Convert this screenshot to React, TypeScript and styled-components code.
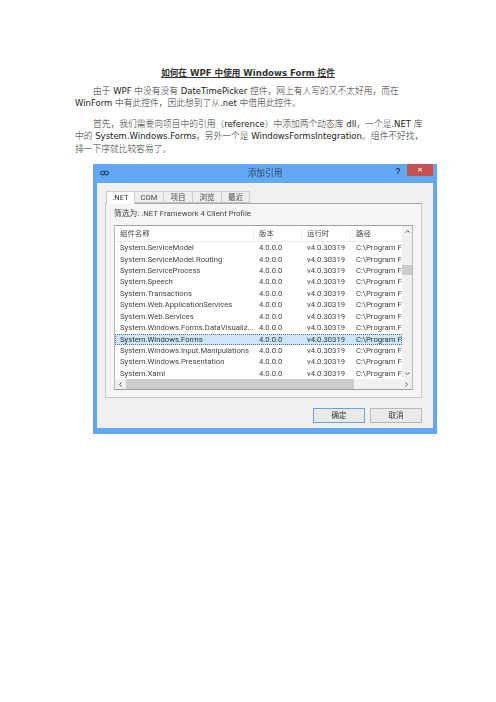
import React from 'react';
import styled, {createGlobalStyle} from 'styled-components';

const GlobalStyle = createGlobalStyle`
    html, body {
        margin: 0;
        padding: 0;
        background: #fff;
    }
`;

const Page = styled.div`
    width: 496px;
    height: 702px;
    overflow: hidden;
    padding: 67px 0 0 75px;
    box-sizing: border-box;
    color: #222;
    font-family: "DejaVu Sans", "Noto Sans CJK SC", sans-serif;
`;

const Title = styled.h1`
    margin: 0 0 4.6px;
    width: 346px;
    font-size: 8.6px;
    line-height: 13px;
    font-weight: 700;
    text-align: center;
    text-decoration: underline;
    color: #333;
`;

const Paragraph = styled.p`
    margin: 0 0 7.6px;
    width: 360px;
    font-size: 8.5px;
    line-height: 12.7px;
    text-indent: 18px;
    white-space: nowrap;
`;

const Cjk = styled.span`
    font-family: "Noto Sans CJK SC", sans-serif;
    font-size: 8.75px;
    line-height: 1;
    font-weight: 300;
    color: #333;
`;

const Window = styled.div`
    width: 344px;
    height: 270px;
    margin: 8.4px 0 0 18px;
    padding: 0 4px 6px;
    box-sizing: border-box;
    display: flex;
    flex-direction: column;
    background: #62a8f4;
    font-family: Roboto, "Noto Sans CJK SC", sans-serif;
    color: #444;
    filter: blur(0.35px);
`;

const TitleBar = styled.div`
    height: 19px;
    flex: none;
    display: grid;
    grid-template-columns: 1fr auto 1fr;
    color: #33475c;
`;

const TitleIcon = styled.svg`
    width: 9px;
    height: 6px;
    margin: 6px 0 0 3px;
`;

const TitleText = styled.div`
    font-size: 8.7px;
    line-height: 18px;
`;

const TitleButtons = styled.div`
    display: flex;
    justify-content: flex-end;
    align-items: flex-start;
`;

const HelpButton = styled.div`
    width: 12px;
    margin-right: 3px;
    font: 700 9px/14px "Liberation Sans", sans-serif;
    text-align: center;
    color: #243a52;
`;

const CloseButton = styled.div`
    width: 26px;
    height: 12px;
    background: #c75050;
    color: #fff;
    font: 700 8px/12px "Liberation Sans", sans-serif;
    text-align: center;
`;

const Client = styled.div`
    flex: 1;
    display: flex;
    flex-direction: column;
    background: #f0f0f0;
    padding: 8px 11px 5px 8px;
    min-height: 0;
`;

const TabStrip = styled.div`
    display: flex;
    height: 12px;
    padding-left: 1px;
`;

const Tab = styled.div<{$active?: boolean; $width: number}>`
    width: ${p => p.$width}px;
    box-sizing: border-box;
    height: ${p => (p.$active ? 13 : 12)}px;
    font-size: 7.6px;
    line-height: 12px;
    text-align: center;
    position: relative;
    z-index: ${p => (p.$active ? 1 : 0)};
    background: ${p => (p.$active ? '#fff' : '#eeeeee')};
    border: 1px solid #cccccc;
    border-bottom: ${p => (p.$active ? 'none' : '1px solid #c4c4c4')};
    border-left-width: ${p => (p.$active ? 1 : 0)}px;
    color: ${p => (p.$active ? '#333' : '#4a4a4a')};
`;

const TabPage = styled.div`
    height: 195px;
    box-sizing: border-box;
    padding: 0 8px;
    background: #f5f5f5;
    border: 1px solid #c8c8c8;
    border-top-color: #a8a8a8;
`;

const Filter = styled.div`
    height: 21px;
    font-size: 7.8px;
    line-height: 20px;
    white-space: nowrap;
`;

const ListBox = styled.div`
    width: 299px;
    height: 165px;
    box-sizing: border-box;
    background: #fff;
    border: 1px solid #a0a0a0;
    border-left-color: #b8b8b8;
    border-right-color: #b8b8b8;
    display: flex;
    flex-direction: column;
`;

const ListTop = styled.div`
    flex: 1;
    display: flex;
    min-height: 0;
`;

const Table = styled.div`
    flex: 1;
    min-width: 0;
`;

const Cols = styled.div`
    display: grid;
    grid-template-columns: 139px 48px 49px 52px;
`;

const HeaderRow = styled(Cols)`
    height: 15px;
    border-bottom: 1px solid #ececec;
    font-size: 7.4px;
    line-height: 15px;
`;

const HeaderCell = styled.div`
    padding-left: 5px;
    border-right: 1px solid #f2f2f2;
    overflow: hidden;
`;

const Row = styled(Cols)<{$selected?: boolean}>`
    height: 11.45px;
    box-sizing: border-box;
    font-size: 7.7px;
    line-height: 11px;
    background: ${p => (p.$selected ? '#cfe6f8' : 'transparent')};
    outline: ${p => (p.$selected ? '1px dotted #5c6f80' : 'none')};
    outline-offset: -1px;
    color: ${p => (p.$selected ? '#26323c' : '#444')};
`;

const Cell = styled.div`
    padding-left: 5px;
    white-space: nowrap;
`;

const VScroll = styled.div`
    width: 10px;
    flex: none;
    background: #f0f0f0;
    display: flex;
    flex-direction: column;
    align-items: center;
    justify-content: space-between;
    position: relative;
    padding: 3px 0;
    box-sizing: border-box;
`;

const VThumb = styled.div`
    position: absolute;
    left: 0;
    top: 39px;
    width: 10px;
    height: 10px;
    background: #cdcdcd;
`;

const HScroll = styled.div`
    height: 10px;
    flex: none;
    display: flex;
    align-items: stretch;
    background: #f0f0f0;
`;

const ScrollArrow = styled.div`
    width: 11px;
    flex: none;
    display: flex;
    align-items: center;
    justify-content: center;
`;

const Chevron = styled.svg`
    width: 5px;
    height: 5px;
    fill: none;
    stroke: #555;
    stroke-width: 1;
`;

const HThumb = styled.div`
    width: 228px;
    background: #cdcdcd;
`;

const Spacer = styled.div`
    flex: 1;
`;

const Footer = styled.div`
    flex: 1;
    display: flex;
    justify-content: flex-end;
    align-items: flex-start;
    gap: 5px;
    padding-top: 10px;
`;

const Button = styled.div<{$primary?: boolean}>`
    width: 52px;
    height: 15px;
    box-sizing: border-box;
    background: #e9e9e9;
    border: 1px solid ${p => (p.$primary ? '#6aa4d6' : '#b9b9b9')};
    font-size: 7.6px;
    line-height: 13px;
    text-align: center;
    color: #333;
`;

const rows = [
    'System.ServiceModel',
    'System.ServiceModel.Routing',
    'System.ServiceProcess',
    'System.Speech',
    'System.Transactions',
    'System.Web.ApplicationServices',
    'System.Web.Services',
    'System.Windows.Forms.DataVisualiz..',
    'System.Windows.Forms',
    'System.Windows.Input.Manipulations',
    'System.Windows.Presentation',
    'System.Xaml'
];

const tabs = [
    {label: '.NET', width: 29},
    {label: 'COM', width: 29},
    {label: '项目', width: 29},
    {label: '浏览', width: 29},
    {label: '最近', width: 28}
];

export default function App() {
    return <Page>
        <GlobalStyle/>
        <Title>如何在 WPF 中使用 Windows Form 控件</Title>
        <Paragraph>
            <Cjk>由于</Cjk> WPF <Cjk>中没有没有</Cjk> DateTimePicker <Cjk>控件，网上有人写的又不太好用，而在</Cjk><br/>
            WinForm <Cjk>中有此控件，因此想到了从</Cjk>.net <Cjk>中借用此控件。</Cjk>
        </Paragraph>
        <Paragraph>
            <Cjk>首先，我们需要向项目中的引用（</Cjk>reference<Cjk>）中添加两个动态库</Cjk> dll<Cjk>，一个是</Cjk>.NET <Cjk>库</Cjk><br/>
            <Cjk>中的</Cjk> System.Windows.Forms<Cjk>，另外一个是</Cjk> WindowsFormsIntegration<Cjk>。组件不好找，</Cjk><br/>
            <Cjk>排一下序就比较容易了。</Cjk>
        </Paragraph>
        <Window>
            <TitleBar>
                <TitleIcon viewBox="0 0 9 6" fill="none" stroke="#24405f" strokeWidth="1.2">
                    <ellipse cx="2.6" cy="3" rx="2" ry="2"/>
                    <ellipse cx="6.4" cy="3" rx="2" ry="2"/>
                </TitleIcon>
                <TitleText>添加引用</TitleText>
                <TitleButtons>
                    <HelpButton>?</HelpButton>
                    <CloseButton>×</CloseButton>
                </TitleButtons>
            </TitleBar>
            <Client>
                <TabStrip>
                    {tabs.map((tab, i) => <Tab key={tab.label} $active={i === 0} $width={tab.width}>{tab.label}</Tab>)}
                </TabStrip>
                <TabPage>
                    <Filter>筛选为: .NET Framework 4 Client Profile</Filter>
                    <ListBox>
                        <ListTop>
                            <Table>
                                <HeaderRow>
                                    <HeaderCell>组件名称</HeaderCell>
                                    <HeaderCell>版本</HeaderCell>
                                    <HeaderCell>运行时</HeaderCell>
                                    <HeaderCell>路径</HeaderCell>
                                </HeaderRow>
                                {rows.map(name => <Row key={name} $selected={name === 'System.Windows.Forms'}>
                                    <Cell>{name}</Cell>
                                    <Cell>4.0.0.0</Cell>
                                    <Cell>v4.0.30319</Cell>
                                    <Cell>C:\Program F</Cell>
                                </Row>)}
                            </Table>
                            <VScroll>
                                <Chevron viewBox="0 0 5 5"><path d="M0.5 3.5 2.5 1.5 4.5 3.5"/></Chevron>
                                <VThumb/>
                                <Chevron viewBox="0 0 5 5"><path d="M0.5 1.5 2.5 3.5 4.5 1.5"/></Chevron>
                            </VScroll>
                        </ListTop>
                        <HScroll>
                            <ScrollArrow><Chevron viewBox="0 0 5 5"><path d="M3.5 0.5 1.5 2.5 3.5 4.5"/></Chevron></ScrollArrow>
                            <HThumb/>
                            <Spacer/>
                            <ScrollArrow><Chevron viewBox="0 0 5 5"><path d="M1.5 0.5 3.5 2.5 1.5 4.5"/></Chevron></ScrollArrow>
                        </HScroll>
                    </ListBox>
                </TabPage>
                <Footer>
                    <Button $primary>确定</Button>
                    <Button>取消</Button>
                </Footer>
            </Client>
        </Window>
    </Page>;
}
